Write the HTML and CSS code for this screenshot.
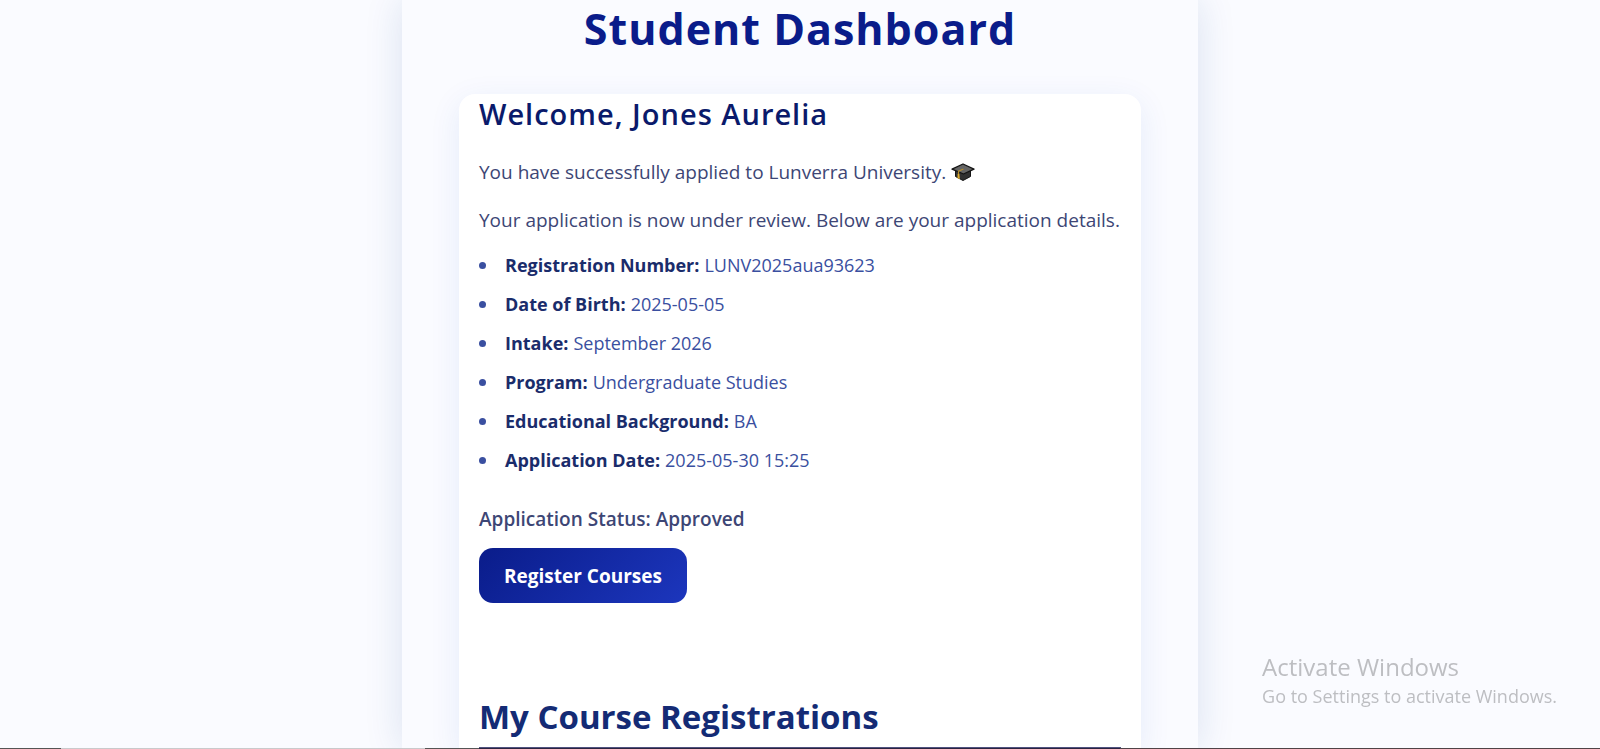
FILE: index.html
```html
<!DOCTYPE html>
<html lang="en">
<head>
<meta charset="utf-8">
<title>Student Dashboard</title>
<link rel="stylesheet" href="styles.css">
</head>
<body>
<main class="dashboard">
  <h1 class="page-title">Student Dashboard</h1>
  <section class="card">
    <h2 class="welcome">Welcome, Jones Aurelia</h2>
    <p class="text">You have successfully applied to Lunverra University.
      <svg class="cap" viewBox="0 0 24 20" role="img" aria-label="Graduation cap">
        <path d="M4.500 9v5.500l7.500 4 7.500-4V9z" fill="#303030" stroke="#141414" stroke-width="1"/>
        <path d="M12 2 23 7.200 12.500 12 1 7.200z" fill="#646464" stroke="#141414" stroke-width="1.300" stroke-linejoin="round"/>
        <path d="M12.500 7 7.500 9.200v4" fill="none" stroke="#b38a2b" stroke-width="1.200"/>
        <path d="M6.700 12h1.600l.6 5-2.500-.8z" fill="#e0ac2c"/>
      </svg>
    </p>
    <p class="text">Your application is now under review. Below are your application details.</p>
    <ul class="details">
      <li><strong>Registration Number:</strong> LUNV2025aua93623</li>
      <li><strong>Date of Birth:</strong> 2025-05-05</li>
      <li><strong>Intake:</strong> September 2026</li>
      <li><strong>Program:</strong> Undergraduate Studies</li>
      <li><strong>Educational Background:</strong> BA</li>
      <li><strong>Application Date:</strong> 2025-05-30 15:25</li>
    </ul>
    <p class="status">Application Status: Approved</p>
    <button class="register" type="button">Register Courses</button>
    <h2 class="courses-title">My Course Registrations</h2>
    <div class="courses-head"></div>
  </section>
</main>
<aside class="watermark">
  <p class="watermark-title">Activate Windows</p>
  <p class="watermark-text">Go to Settings to activate Windows.</p>
</aside>
<div class="edge"></div>
</body>
</html>
```

FILE: styles.css
```css
* {
  box-sizing: border-box;
}

body {
  margin: 0;
  background: #fafbff;
  color: #3d4675;
  font-family: "Open Sans", "Noto Sans", sans-serif;
  font-size: 19px;
}

h1, h2, p, ul {
  margin: 0;
}

.dashboard {
  max-width: 796px;
  min-height: 100vh;
  margin: 0 auto;
  padding: 0 57px;
  background: #fafbff;
  box-shadow: 0 0 36px rgba(20, 70, 150, 0.14);
}

.page-title {
  padding-bottom: 36px;
  color: #0a1c8a;
  font-size: 43px;
  font-weight: 700;
  line-height: 58px;
  letter-spacing: 1px;
  text-align: center;
}

.card {
  padding: 0 20px;
  border-radius: 16px 16px 0 0;
  background: #fff;
  box-shadow: 0 8px 32px rgba(20, 80, 200, 0.09);
}

.welcome {
  margin-bottom: 20px;
  color: #0a1a6b;
  font-size: 29px;
  font-weight: 600;
  line-height: 40px;
  letter-spacing: 1px;
}

.text {
  margin-bottom: 12px;
  line-height: 36px;
}

.cap {
  width: 24px;
  height: 20px;
  vertical-align: -3px;
}

.details {
  display: grid;
  gap: 7px;
  margin-top: -1px;
  padding: 0;
  color: #3a4fa0;
  font-size: 18px;
  line-height: 32px;
  list-style: none;
}

.details li {
  display: flex;
  align-items: center;
  gap: 5px;
}

.details li::before {
  content: "";
  width: 7px;
  height: 7px;
  margin-right: 14px;
  border-radius: 50%;
  background: #3a4fa0;
}

.details strong {
  color: #1a2c6b;
}

.status {
  margin: 24px 0 10px;
  font-weight: 600;
  line-height: 38px;
}

.register {
  display: block;
  padding: 15px 25px 13px;
  border: 0;
  border-radius: 14px;
  background: linear-gradient(135deg, #0a1c8a, #1c36bd);
  color: #fff;
  font: 700 19px/27px "Open Sans", "Noto Sans", sans-serif;
}

.courses-title {
  margin-top: 90px;
  padding-bottom: 6px;
  color: #142b75;
  font-size: 33px;
  font-weight: 700;
  line-height: 48px;
}

.courses-head {
  height: 2px;
  background: #50527f;
}

.watermark {
  position: fixed;
  right: 43px;
  bottom: 40px;
  color: #bdbec2;
}

.watermark-title {
  font-size: 24px;
  line-height: 32px;
}

.watermark-text {
  font-size: 18px;
  line-height: 26px;
}

.edge {
  position: fixed;
  right: 0;
  bottom: 0;
  left: 0;
  height: 1px;
  background: linear-gradient(90deg, #555 61px, #c9cacc 61px 425px, #555 425px 479px, #2a2340 479px 1120px, #4f4347 1120px);
}
```
